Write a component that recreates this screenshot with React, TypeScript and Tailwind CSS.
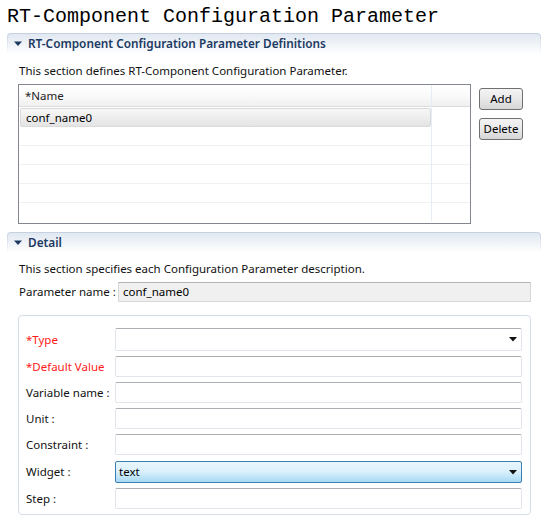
import React from "react";

const ui = { fontFamily: '"Noto Sans", "Open Sans", sans-serif' };

function SectionHeader({ title }: { title: string }) {
  return (
    <div className="ml-[7px] w-[534px] h-[21px] rounded-t-[4px] p-[1px] pb-0 bg-gradient-to-b from-[#c4d0df] to-white">
      <div className="h-full rounded-t-[3px] bg-gradient-to-b from-[#e1e8f1] to-white flex items-center">
        <svg width="8" height="6" viewBox="0 0 8 6" className="ml-[6px] mr-[6px]">
          <polygon points="0,0.5 8,0.5 4,5" fill="#1f3a60" />
        </svg>
        <span className="text-[11.8px] font-semibold text-[#1c3a63] leading-none whitespace-nowrap" style={ui}>
          {title}
        </span>
      </div>
    </div>
  );
}

function Btn({ label }: { label: string }) {
  return (
    <div className="w-[44px] h-[22px] rounded-[3px] border border-[#707070] bg-gradient-to-b from-[#f4f4f4] via-[#e8e8e8] to-[#d6d6d6] flex items-center justify-center text-[11.5px] text-black" style={ui}>
      {label}
    </div>
  );
}

function Field({ h = 21, children }: { h?: number; children?: React.ReactNode }) {
  return (
    <div
      className={`w-[407px] ${h === 23 ? "h-[23px]" : "h-[21px]"} rounded-[2px] border border-[#e1e6ec] border-t-[#acaeb4] bg-white flex items-center`}
    >
      {children}
    </div>
  );
}

function Arrow() {
  return (
    <svg width="8" height="5" viewBox="0 0 8 5" className="ml-auto mr-[4px]">
      <polygon points="0,0 8,0 4,4.5" fill="#111" />
    </svg>
  );
}

function Row({ label, red, children, h }: { label: string; red?: boolean; children?: React.ReactNode; h?: number }) {
  return (
    <div className="flex items-center">
      <div className={`w-[89px] whitespace-nowrap text-[11.5px] ${red ? "text-[#ff1a1a]" : "text-[#111]"}`} style={ui}>
        {label}
      </div>
      <Field h={h}>{children}</Field>
    </div>
  );
}

export default function App() {
  const emptyRows = [0, 1, 2, 3];
  return (
    <div className="w-[546px] h-[520px] bg-white relative overflow-hidden">
      <div className="h-[33px] pl-[7px] flex items-center">
        <span className="text-[20px] text-black leading-none" style={{ fontFamily: '"Liberation Mono", monospace' }}>
          RT-Component Configuration Parameter
        </span>
      </div>
      <SectionHeader title="RT-Component Configuration Parameter Definitions" />
      <div className="pl-[19px] mt-[9px] h-[16px] text-[11.5px] leading-[16px] text-[#111] whitespace-nowrap" style={ui}>
        This section defines RT-Component Configuration Parameter.
      </div>
      <div className="flex mt-[5px] ml-[18px]">
        <div className="w-[453px] h-[140px] border border-[#828790] relative bg-white">
          <div className="h-[22px] bg-gradient-to-b from-white via-[#fafafa] to-[#f0f0f0] border-b border-[#dcdcdc] flex items-end">
            <span className="pl-[6px] pb-[2px] text-[11.5px] text-[#222]" style={ui}>*Name</span>
          </div>
          <div className="h-[20px] pt-[1px] pl-[1px]">
            <div className="w-[411px] h-[19px] rounded-[2px] border border-[#dadada] bg-gradient-to-b from-[#f7f7f7] to-[#e4e4e4] flex items-center">
              <span className="pl-[5px] text-[11.5px] text-black" style={ui}>conf_name0</span>
            </div>
          </div>
          {emptyRows.map((i) => (
            <div key={i} className="h-[19px] border-b border-[#f0f0f0]" />
          ))}
          <div className="absolute left-[412px] top-0 bottom-[2px] w-px bg-[#e6edf6]" />
        </div>
        <div className="ml-[8px] mt-[4px] flex flex-col gap-[8px]">
          <Btn label="Add" />
          <Btn label="Delete" />
        </div>
      </div>
      <div className="mt-[8px]">
        <SectionHeader title="Detail" />
      </div>
      <div className="pl-[19px] mt-[8px] h-[16px] text-[11.5px] leading-[16px] text-[#111] whitespace-nowrap" style={ui}>
        This section specifies each Configuration Parameter description.
      </div>
      <div className="flex items-center mt-[5px] ml-[19px]">
        <div className="w-[99px] whitespace-nowrap text-[11.5px] text-[#111]" style={ui}>Parameter name :</div>
        <div className="w-[413px] h-[20px] border border-[#d8d8d8] border-t-[#b4b4b4] bg-[#f0f0f0] flex items-center">
          <span className="pl-[4px] text-[11.5px] text-black" style={ui}>conf_name0</span>
        </div>
      </div>
      <div className="mt-[13px] ml-[18px] w-[513px] h-[200px] rounded-[4px] border border-[#d5dde6] pl-[7px] pt-[12px] flex flex-col gap-[5px]">
        <Row label="*Type" red h={23}>
          <Arrow />
        </Row>
        <Row label="*Default Value" red />
        <Row label="Variable name :" />
        <Row label="Unit :" />
        <Row label="Constraint :" />
        <div className="flex items-center mt-[1px]">
          <div className="w-[89px] text-[11.5px] text-[#111]" style={ui}>Widget :</div>
          <div className="w-[407px] h-[22px] rounded-[2px] border border-[#3c7fb1] bg-gradient-to-b from-[#eaf6fd] via-[#d9f0fc] to-[#a7d9f5] flex items-center">
            <span className="pl-[3px] text-[11.5px] text-black" style={ui}>text</span>
            <Arrow />
          </div>
        </div>
        <Row label="Step :" />
      </div>
    </div>
  );
}
